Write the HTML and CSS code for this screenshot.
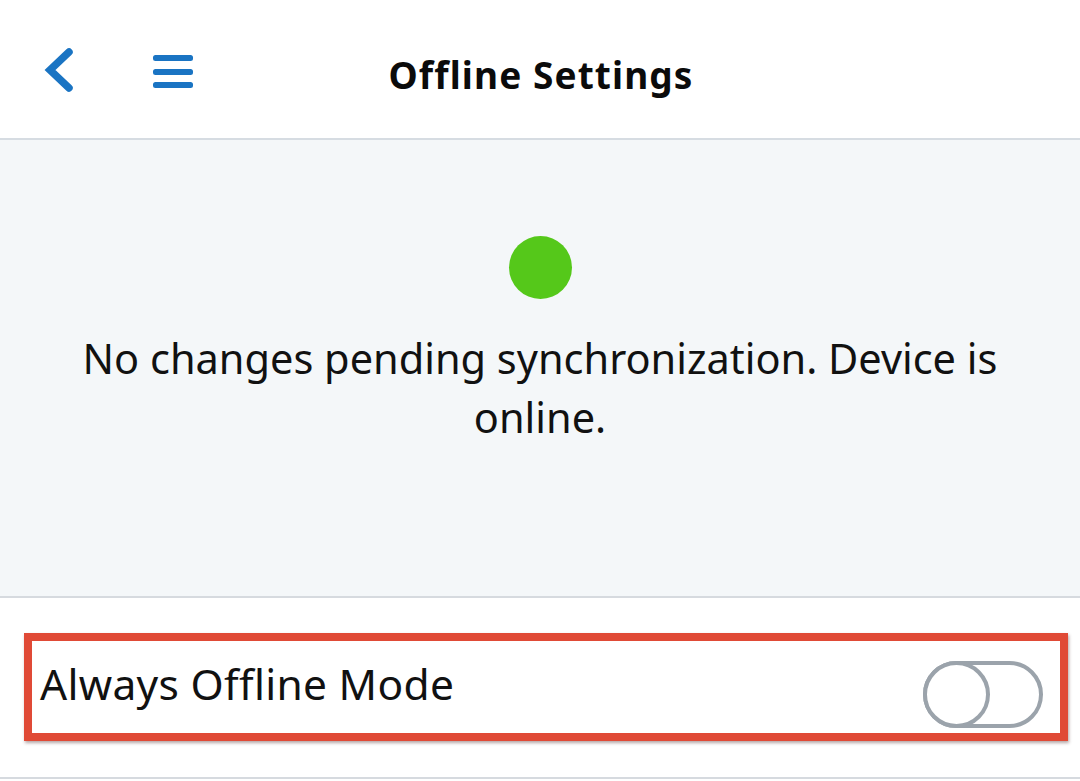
FILE: index.html
```html
<!DOCTYPE html>
<html lang="en">
<head>
<meta charset="utf-8">
<title>Offline Settings</title>
<link rel="stylesheet" href="styles.css">
</head>
<body>
<header class="topbar">
  <button class="icon-btn back" aria-label="Back">
    <svg width="40" height="50" viewBox="0 0 40 50"><path d="M29 7 L10 25 L29 43" fill="none" stroke="#1a74c3" stroke-width="7.5" stroke-linecap="round" stroke-linejoin="miter"/></svg>
  </button>
  <button class="icon-btn menu" aria-label="Menu">
    <svg width="42" height="36" viewBox="0 0 42 36"><rect x="1" y="3" width="40" height="6" rx="2.5" fill="#1a74c3"/><rect x="1" y="17" width="40" height="6" rx="2.5" fill="#1a74c3"/><rect x="1" y="30" width="40" height="6" rx="2.5" fill="#1a74c3"/></svg>
  </button>
  <h1 class="title">Offline Settings</h1>
</header>
<section class="status">
  <div class="dot"></div>
  <p class="status-text">No changes pending synchronization. Device is online.</p>
</section>
<section class="settings">
  <div class="highlight">
    <span class="label">Always Offline Mode</span>
    <span class="toggle"><span class="knob"></span></span>
  </div>
</section>
</body>
</html>
```
FILE: styles.css
```css
* { box-sizing: border-box; }
html, body { margin: 0; padding: 0; }
body {
  background: #ffffff;
  font-family: "Noto Sans", "Open Sans", sans-serif;
  color: #111111;
  width: 1080px;
  height: 781px;
  overflow: hidden;
}
.topbar {
  position: relative;
  height: 140px;
  border-bottom: 2px solid #d6dce2;
  display: flex;
  align-items: center;
  padding-left: 40px;
}
.icon-btn {
  background: none;
  border: 0;
  padding: 0;
  display: flex;
  align-items: center;
  justify-content: center;
}
.back { width: 40px; height: 50px; margin-top: 2px; }
.menu { width: 42px; height: 36px; margin-left: 72px; margin-top: 2px; }
.title {
  position: absolute;
  left: 0;
  right: 0;
  top: 52px;
  margin: 0;
  text-align: center;
  font-size: 37px;
  font-weight: 700;
  letter-spacing: 1.1px;
  line-height: 46px;
  color: #0b0b0b;
  padding-left: 2px;
}
.status {
  height: 458px;
  background: #f4f7f9;
  border-bottom: 2px solid #d6dadf;
  display: flex;
  flex-direction: column;
  align-items: center;
  padding-top: 96px;
}
.dot {
  width: 63px;
  height: 63px;
  border-radius: 50%;
  background: #55c81a;
}
.status-text {
  margin: 30px 0 0;
  width: 980px;
  text-align: center;
  font-size: 41.5px;
  line-height: 59px;
  color: #111111;
}
.settings {
  height: 181px;
  border-bottom: 2px solid #d6dadf;
  padding: 35px 12px 0 24px;
}
.highlight {
  height: 108px;
  border: 8px solid #e04a36;
  box-shadow: 1px 2px 3px rgba(90, 60, 60, 0.45);
  display: flex;
  align-items: center;
  justify-content: space-between;
  padding: 0 17px 0 8px;
}
.label {
  font-size: 42.5px;
  letter-spacing: 0.3px;
  line-height: 54px;
  margin-top: -7px;
  color: #111111;
}
.toggle {
  position: relative;
  width: 120px;
  height: 67px;
  border: 4px solid #9ba3ab;
  border-radius: 34px;
  margin-top: 14px;
}
.knob {
  position: absolute;
  left: -4px;
  top: -4px;
  width: 67px;
  height: 67px;
  border: 4px solid #9ba3ab;
  border-radius: 50%;
  background: #ffffff;
}
```
